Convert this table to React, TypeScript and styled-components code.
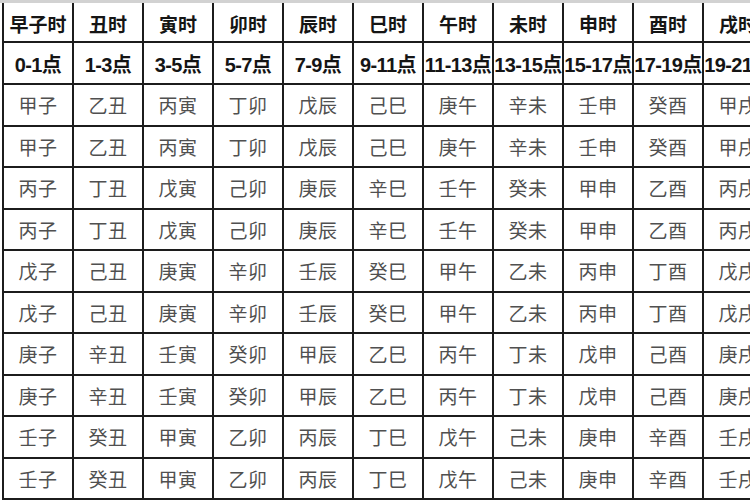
import React from 'react';
import styled, { createGlobalStyle } from 'styled-components';

const GlobalStyle = createGlobalStyle`
  html, body {
    margin: 0;
    padding: 0;
    background: #ffffff;
    overflow: hidden;
  }
  body {
    font-family: "Liberation Sans", "Noto Sans CJK SC", sans-serif;
  }
`;

const branches = ['子', '丑', '寅', '卯', '辰', '巳', '午', '未', '申', '酉', '戌', '亥'];
const stems = ['甲', '乙', '丙', '丁', '戊', '己', '庚', '辛', '壬', '癸'];

const headers = ['早子时', ...branches.slice(1).map((b) => b + '时')];
const times = ['0-1点', '1-3点', '3-5点', '5-7点', '7-9点', '9-11点', '11-13点', '13-15点', '15-17点', '17-19点', '19-21点', '21-23点'];

// each starting stem appears twice (甲己, 乙庚 ... day pairs)
const rowStarts = [0, 0, 2, 2, 4, 4, 6, 6, 8, 8];

const buildRow = (start: number) => branches.map((b, i) => stems[(start + i) % 10] + b);

const Page = styled.div`
  width: 750px;
  height: 500px;
  overflow: hidden;
  background: #ffffff;
  display: flex;
  flex-direction: column;
`;

const TopStrip = styled.div`
  height: 3px;
  background: #d2d2d2;
  flex-shrink: 0;
`;

const Grid = styled.div`
  display: grid;
  grid-template-columns: repeat(12, 68px);
  grid-template-rows: 38px 40px repeat(10, 39.5px);
  column-gap: 2px;
  row-gap: 2px;
  padding: 0 2px 3px 2px;
  margin-left: 2px;
  width: max-content;
  background: #1c1c1c;
`;

const Cell = styled.div<{ $kind: 'head' | 'time' | 'data' }>`
  background: #ffffff;
  display: flex;
  align-items: center;
  justify-content: center;
  white-space: nowrap;
  overflow: visible;
  position: relative;
  font-family: "Liberation Sans", "Noto Sans CJK SC", sans-serif;
  font-size: ${(p) => (p.$kind === 'time' ? '20px' : '19px')};
  font-weight: ${(p) => (p.$kind === 'data' ? 400 : 700)};
  color: ${(p) => (p.$kind === 'data' ? '#505050' : '#151515')};
  letter-spacing: ${(p) => (p.$kind === 'time' ? '-0.6px' : p.$kind === 'data' ? '0.5px' : '0')};
  padding-top: ${(p) => (p.$kind === 'head' ? '2px' : '0')};
`;

export default function App() {
  return (
    <>
      <GlobalStyle />
      <Page>
        <TopStrip />
        <Grid>
          {headers.map((h) => (
            <Cell key={h} $kind="head">{h}</Cell>
          ))}
          {times.map((t) => (
            <Cell key={t} $kind="time">{t}</Cell>
          ))}
          {rowStarts.map((s, r) =>
            buildRow(s).map((c, i) => (
              <Cell key={`${r}-${i}`} $kind="data">{c}</Cell>
            ))
          )}
        </Grid>
      </Page>
    </>
  );
}
